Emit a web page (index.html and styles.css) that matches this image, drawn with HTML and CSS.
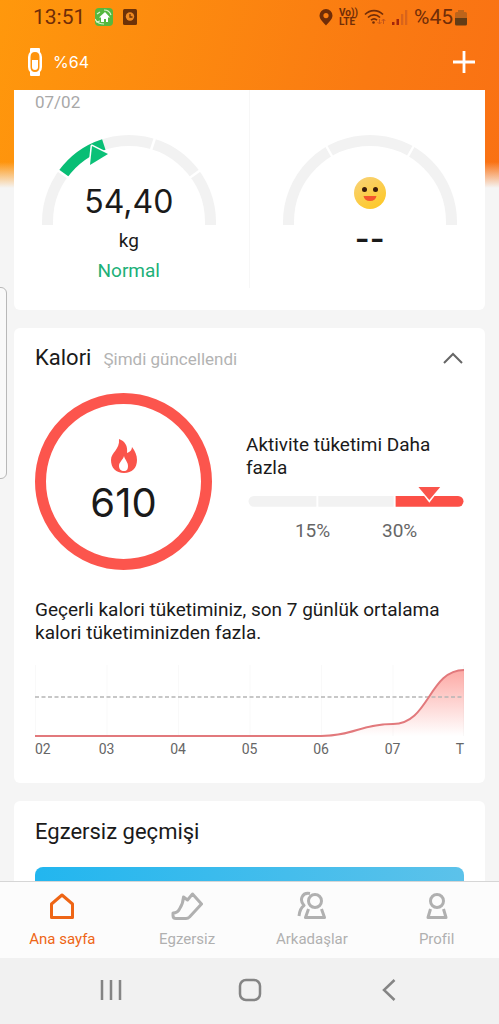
FILE: index.html
```html
<!DOCTYPE html>
<html lang="tr">
<head>
<meta charset="utf-8">
<meta name="viewport" content="width=device-width, initial-scale=1">
<title>Ana sayfa</title>
<link rel="stylesheet" href="styles.css">
</head>
<body>
<div class="app">
  <div class="statusbar">
    <div class="status-group status-left">
      <span class="clock">13:51</span>
      <svg width="18" height="18" viewBox="0 0 18 18"><rect width="18" height="18" rx="4" fill="#55b83f"/><path d="M4 9.500 10 4l5 5.500h-2V14h-2v-3H9v3H6V9.500z" fill="#fff"/><path d="M0 11c2 4 5 5 9 5M9 2c4 0 6 2 7 5M2 6l3-2M1 14l4-1" stroke="#d9f5cf" stroke-width="1.200" fill="none"/></svg>
      <svg width="14" height="18" viewBox="0 0 14 18"><rect y="1" width="14" height="16" rx="1.500" fill="#6d3208"/><circle cx="7" cy="8.500" r="4.200" fill="#f08a20"/><path d="M7 6v3h2.500" stroke="#6d3208" stroke-width="1.300" fill="none"/></svg>
    </div>
    <div class="status-group status-right">
      <svg width="14" height="17" viewBox="0 0 14 17"><path fill-rule="evenodd" d="M7 0a6.500 6.500 0 0 1 6.500 6.500C13.500 10.500 9 14 7 16.500 5 14 .5 10.500.5 6.500A6.500 6.500 0 0 1 7 0zm0 4a2.600 2.600 0 1 0 0 5.200A2.600 2.600 0 0 0 7 4z" fill="#702d08"/></svg>
      <span class="volte">Vo))<br>LTE</span>
      <svg width="22" height="17" viewBox="0 0 22 17"><g fill="none" stroke="#702d08" stroke-width="1.700"><path d="M1 5.500c5-5.300 13-5.300 18 0M4 8.500c3.500-3.500 8.500-3.500 12 0M7 11.200c2-1.800 4.200-1.800 6 0"/></g><circle cx="9.500" cy="13.500" r="1.300" fill="#702d08"/><path d="M15.500 10v5m-2-2 2 2 2-2M19.500 15v-5m-1.800 2 1.800-2 1.800 2" fill="none" stroke="#c3561a"/></svg>
      <svg width="16" height="17" viewBox="0 0 16 17"><path d="M0 13h2.500v3H0zM4.500 10H7v6H4.500z" fill="#a3260b"/><path d="M9 5h2.300v11H9zM13 1h2.300v15H13z" fill="#d9641b"/></svg>
      <span class="battery-text">%45</span>
      <svg width="12" height="17" viewBox="0 0 12 17"><path d="M3 1h6v2h1.500Q12 3 12 4.500V10H0V4.500Q0 3 1.500 3H3z" fill="#bd641b"/><path d="M0 9h12v6q0 1.500-1.500 1.500h-9Q0 16.500 0 15z" fill="#633c16"/></svg>
    </div>
  </div>

  <header class="topbar">
    <div class="device">
      <svg width="14" height="28" viewBox="0 0 14 28"><path fill-rule="evenodd" d="M2 1q0-1 1-1h8q1 0 1 1v3q2 2 2 5v10q0 3-2 5v3q0 1-1 1H3q-1 0-1-1v-3q-2-2-2-5V9q0-3 2-5zm5 3Q2.500 4 2.500 9v10q0 5 4.500 5t4.500-5V9Q11.500 4 7 4z" fill="#fff"/><path d="M4 12h6v7q0 3-3 3t-3-3z" fill="#fff"/></svg>
      <span>%64</span>
    </div>
    <button class="icon-button" type="button" aria-label="Ekle"><svg width="24" height="24" viewBox="0 0 24 24"><path d="M12 1v22M1 12h22" stroke="#fff" stroke-width="2.800"/></svg></button>
  </header>

  <main class="content">
    <section class="card metrics">
      <div class="metric metric-weight">
        <div class="date">07/02</div>
        <svg class="gauge" width="180" height="96" viewBox="0 0 180 96">
          <g fill="none" stroke-width="11">
            <path d="M8.500 92v-3A81.500 81.500 0 0 1 171.500 89v3" stroke="#f2f2f2"/>
            <path d="M24.100 41.100A81.500 81.500 0 0 1 64.800 11.500" stroke="#08be75"/>
          </g>
          <path d="m17 36 14 10M117 2l-6 18M163 36l-14 10" stroke="#fff" stroke-width="2.500"/>
          <path d="m53 13 16 8-18 11z" fill="#0bc178" stroke="#fff" stroke-width="3" stroke-linejoin="round" paint-order="stroke"/>
        </svg>
        <div class="readout"><strong class="weight">54,40</strong><span class="unit">kg</span><span class="level">Normal</span></div>
      </div>
      <div class="metric metric-mood">
        <svg class="gauge" width="180" height="96" viewBox="0 0 180 96">
          <path d="M8.500 92v-3A81.500 81.500 0 0 1 171.500 89v3" fill="none" stroke="#f2f2f2" stroke-width="11"/>
          <path d="m44 9 9 16M136 9l-9 16" stroke="#fff" stroke-width="2.500"/>
        </svg>
        <div class="readout">
          <svg class="face" width="32" height="32" viewBox="0 0 32 32"><defs><linearGradient id="skin" x2="0.600" y2="1"><stop stop-color="#f8d27a"/><stop offset="1" stop-color="#fdc92c"/></linearGradient></defs><circle cx="16" cy="16" r="16" fill="url(#skin)"/><circle cx="10.500" cy="12.500" r="2.500" fill="#3b1c0a"/><circle cx="21.500" cy="12.500" r="2.500" fill="#3b1c0a"/><path d="M9.500 19h13q-1 5-6.500 5t-6.500-5z" fill="#f4562d"/></svg>
          <strong class="empty">--</strong>
        </div>
      </div>
    </section>

    <section class="card calories">
      <div class="card-head">
        <h2>Kalori</h2>
        <span class="updated">Şimdi güncellendi</span>
        <button class="icon-button" type="button" aria-label="Daralt"><svg width="20" height="12" viewBox="0 0 20 12"><path d="m1 11 9-9 9 9" fill="none" stroke="#666" stroke-width="2"/></svg></button>
      </div>
      <div class="burn">
        <div class="ring">
          <svg width="26" height="34" viewBox="0 0 26 34"><path fill-rule="evenodd" d="M8 0c6 2 9 7 8 14 3-1 5-3 5-6 3 4 5 8 5 13 0 8-5 13-13 13S0 29 0 21C0 13 9 11 8 0zm5 17c-1 4-5 6-5 10 0 3 2 5 5 5s4-2 4-5c0-4-3-6-4-10z" fill="#fa544b"/></svg>
          <strong>610</strong>
        </div>
        <div class="activity">
          <p>Aktivite tüketimi Daha fazla</p>
          <svg class="scale" viewBox="0 0 218 22"><path d="M6 9h63v11H6a5.500 5.500 0 0 1 0-11zM71 9h76v11H71z" fill="#f2f2f2"/><path d="M149 9h63a5.500 5.500 0 0 1 0 11h-63z" fill="#fc5047"/><path d="M170-1h26l-13 17z" fill="#fff"/><path d="M172 0h22l-11 13z" fill="#fa544b"/></svg>
          <div class="scale-labels"><span>15%</span><span>30%</span></div>
        </div>
      </div>
      <p class="summary">Geçerli kalori tüketiminiz, son 7 günlük ortalama kalori tüketiminizden fazla.</p>
      <svg class="chart" viewBox="0 0 429 76" preserveAspectRatio="none">
        <defs><linearGradient id="area" x2="0" y2="1"><stop stop-color="#fa544b" stop-opacity=".5"/><stop offset="1" stop-color="#fa544b" stop-opacity="0"/></linearGradient></defs>
        <path d="M.5 0v71M72 0v71M143.500 0v71M215 0v71M286.500 0v71M358 0v71M428.500 0v71" stroke="#f9f9f9"/>
        <path d="M286 71C318 71 326 59 358 59 394 59 394 5 429 5V71z" fill="url(#area)"/>
        <path d="M0 32h429" stroke="#b5b5b5" stroke-width="1.500" stroke-dasharray="4 2.500"/>
        <path d="M0 71H286C318 71 326 59 358 59 394 59 394 5 429 5" fill="none" stroke="#e2797c" stroke-width="2"/>
      </svg>
      <div class="days"><span>02</span><span>03</span><span>04</span><span>05</span><span>06</span><span>07</span><span>T</span></div>
    </section>

    <section class="card history">
      <h2>Egzersiz geçmişi</h2>
      <div class="banner"></div>
    </section>
  </main>

  <nav class="tabs">
    <a class="tab active" href="#home"><svg width="30" height="30" viewBox="0 0 30 30"><path d="M4.500 13 15 4l10.500 9v13.500h-21z"/></svg>Ana sayfa</a>
    <a class="tab" href="#exercise"><svg class="thin" width="32" height="30" viewBox="0 0 32 30"><path d="m12.500 6 4 3 5-6 9 10-12 13q-1.500 1.500-3.500 1.500H5q-3 0-3-3V22q4.500 0 6.500-4 3.500-5 4-12z"/></svg>Egzersiz</a>
    <a class="tab" href="#friends"><svg class="thin" width="30" height="30" viewBox="0 0 30 30"><circle cx="18" cy="10" r="6.500"/><path d="m11.500 18-3 8.500h19l-3-8.500M13 2.500C5 1 2 9 7 14.500c-3 2-4.500 6-5 10.500"/></svg>Arkadaşlar</a>
    <a class="tab" href="#profile"><svg class="thin" width="30" height="30" viewBox="0 0 30 30"><circle cx="15" cy="10" r="6.500"/><path d="m8.500 18-2.500 8.500h18L21.500 18"/></svg>Profil</a>
  </nav>

  <div class="sysnav">
    <button class="icon-button" type="button" aria-label="Son uygulamalar"><svg width="22" height="22" viewBox="0 0 22 22"><path d="M2 1v20M11 1v20M20 1v20"/></svg></button>
    <button class="icon-button" type="button" aria-label="Ana ekran"><svg width="24" height="24" viewBox="0 0 24 24"><rect x="2" y="2" width="20" height="20" rx="6"/></svg></button>
    <button class="icon-button" type="button" aria-label="Geri"><svg width="14" height="22" viewBox="0 0 14 22"><path d="M12.500 1 2 11l10.500 10"/></svg></button>
  </div>
  <div class="edge-handle"></div>
</div>
</body>
</html>
```
FILE: styles.css
```css
* { box-sizing: border-box; }
body { margin: 0; font-family: Roboto, "Noto Sans", sans-serif; color: #1a1a1a; }
h2, p { margin: 0; font-weight: 400; }
strong { font-family: Inter, Roboto, sans-serif; font-weight: 400; }
svg { display: block; flex: none; }

.app {
  position: relative;
  display: flex;
  flex-direction: column;
  height: 100vh;
  overflow: hidden;
  background:
    linear-gradient(to bottom, transparent 162px, #f5f5f5 188px),
    linear-gradient(105deg, #ff980c, #fa7a12 50%, #f96416);
}

.statusbar { display: flex; justify-content: space-between; align-items: center; height: 34px; padding: 0 32px 0 33px; color: #702d08; }
.status-group { display: flex; align-items: center; }
.status-left { gap: 10px; }
.status-right { gap: 6px; }
.clock, .battery-text { font-size: 21px; line-height: 24px; }
.battery-text { margin-right: -4px; }
.volte { font-size: 10px; line-height: 9px; font-weight: 700; }

.topbar { display: flex; justify-content: space-between; align-items: center; height: 56px; padding: 0 23px 0 28px; color: #fff; }
.device { display: flex; align-items: center; gap: 11px; font: 400 16px/20px Inter, sans-serif; }

.icon-button { display: flex; align-items: center; justify-content: center; padding: 0; border: 0; background: none; cursor: pointer; }

.content { flex: 1; min-height: 0; overflow: hidden; display: flex; flex-direction: column; gap: 18px; padding: 0 14px; }
.card { flex: none; background: #fff; border-radius: 6px; padding: 0 21px; }
.card h2 { font-size: 22px; line-height: 26px; }

.metrics { display: grid; grid-template-columns: 1fr 1fr; padding: 0 0 22px; border-radius: 0 0 6px 6px; }
.metric { display: grid; justify-items: center; align-content: start; grid-template-rows: 43px 155px; }
.metric-weight { padding-right: 5px; border-right: 1px solid #f7f7f7; }
.metric-mood { padding-left: 5px; }
.date { grid-area: 1 / 1; justify-self: start; padding-left: 21px; font-size: 17px; line-height: 24px; color: #a8a8a8; }
.gauge { grid-area: 2 / 1; }
.readout { grid-area: 2 / 1; display: flex; flex-direction: column; align-items: center; padding-top: 44px; }
.weight { font-size: 32px; line-height: 50px; }
.unit { font-size: 19px; line-height: 28px; }
.level { font-size: 19px; line-height: 32px; color: #20b078; }
.empty { font-size: 32px; line-height: 60px; font-weight: 600; }

.calories { padding-top: 17px; padding-bottom: 26px; }
.card-head { display: flex; align-items: center; gap: 12px; }
.card-head .icon-button { margin-left: auto; width: 22px; height: 24px; }
.updated { font-size: 17px; line-height: 22px; padding-top: 2px; color: #b3b3b3; }
.burn { display: flex; gap: 34px; margin-top: 22px; }
.ring { flex: none; display: flex; flex-direction: column; align-items: center; width: 177px; height: 177px; padding-top: 35px; border: 11px solid #fc554d; border-radius: 50%; }
.ring strong { font-size: 40px; line-height: 60px; }
.activity { flex: 1; padding-top: 40px; }
.activity p { font-size: 19px; line-height: 23px; }
.scale { width: 100%; margin-top: 8px; padding-left: 2px; }
.scale-labels { display: grid; grid-template-columns: 88fr 88fr 21fr; margin-top: 10px; padding-left: 23px; font-size: 19px; line-height: 24px; text-align: center; color: #666; }
.summary { margin-top: 28px; font-size: 19px; line-height: 23px; }
.chart { width: 100%; height: 76px; margin-top: 21px; }
.days { display: grid; grid-template-columns: 1fr repeat(5, 2fr) 1fr; font-size: 14px; line-height: 16px; text-align: center; color: #666; }
.days span:first-child { text-align: left; }
.days span:last-child { text-align: right; }

.history { padding-top: 18px; }
.banner { height: 120px; margin-top: 22px; border-radius: 8px; background: linear-gradient(90deg, #22b6ef, #5cc2ea); }

.tabs { flex: none; display: flex; height: 77px; border-top: 1px solid #d6d6d6; background: #fcfcfc; }
.tab { flex: 1; display: flex; flex-direction: column; align-items: center; gap: 8px; padding-top: 9px; font-size: 15px; line-height: 20px; color: #b0b0b0; text-decoration: none; }
.tab.active { color: #ee6515; }
.tab svg { fill: none; stroke: currentColor; stroke-width: 3; stroke-linejoin: round; }

.sysnav { flex: none; display: grid; grid-template-columns: repeat(3, 1fr); align-items: center; height: 66px; padding: 0 41px 2px; background: #f1f1f1; }
.sysnav svg { fill: none; stroke: #858585; stroke-width: 2.5; }

/* Floating edge panel grip, partly off the left side */
.edge-handle { position: absolute; top: 287px; left: -8px; width: 15px; height: 192px; border: 1px solid #b8b8b8; border-radius: 6px; background: #f9f9f9; }
```
